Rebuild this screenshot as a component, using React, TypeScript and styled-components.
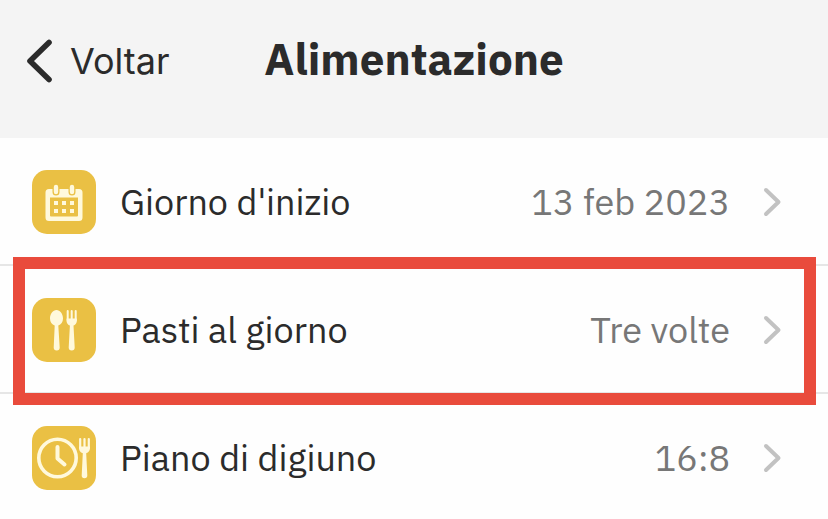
import React from "react";
import styled, { createGlobalStyle } from "styled-components";

const GlobalStyle = createGlobalStyle`
  * { box-sizing: border-box; }
  body {
    margin: 0;
    background: #fefefe;
    color: #2b2b2b;
    font-family: "IBM Plex Sans", "Noto Sans", sans-serif;
  }
`;

const Header = styled.header`
  display: grid;
  grid-template-columns: 1fr auto 1fr;
  align-items: center;
  padding: 8px 24px 24px;
  min-height: 138px;
  background: #f4f4f4;
`;

const BackButton = styled.button`
  display: flex;
  align-items: center;
  justify-self: start;
  gap: 18px;
  padding: 0;
  border: 0;
  background: none;
  color: #2b2b2b;
  font-family: Inter, sans-serif;
  font-size: 36px;
  font-weight: 400;
  line-height: 48px;
  cursor: pointer;
`;

const Title = styled.h1`
  margin: 0;
  padding-bottom: 4px;
  font-size: 44px;
  font-weight: 700;
  line-height: 56px;
`;

const List = styled.ul`
  margin: 0;
  padding: 0;
  list-style: none;
`;

const Item = styled.li`
  position: relative;
  border-bottom: 2px solid #e6e6e6;

  &:last-child {
    border-bottom: 0;
  }
`;

const RowButton = styled.button`
  display: flex;
  align-items: center;
  width: 100%;
  padding: 32px 45px 30px 32px;
  border: 0;
  background: none;
  color: inherit;
  font: inherit;
  font-size: 36px;
  line-height: 64px;
  text-align: left;
  cursor: pointer;

  ${Item}:last-child & {
    padding-bottom: 28px;
  }
`;

const IconTile = styled.span`
  display: flex;
  flex: none;
  width: 64px;
  height: 64px;
  margin-right: 24px;
  border-radius: 15px;
  background: #eac044;
`;

const Label = styled.span`
  flex: 1;
`;

const Value = styled.span`
  margin-right: 31px;
  color: #777777;
`;

const Highlight = styled.div`
  position: absolute;
  inset: -9px 12px -13px 13px;
  border: 12px solid #e94b3c;
  pointer-events: none;
`;

const CREAM = "#fff9dc";

const BackIcon = () => (
  <svg width="28" height="44" viewBox="0 0 28 44" fill="none" aria-hidden="true">
    <path d="M25 3.500 6 22 25 40.500" stroke="#2b2b2b" strokeWidth="5.600" strokeLinecap="round" strokeLinejoin="round" />
  </svg>
);

const ChevronIcon = () => (
  <svg width="22" height="32" viewBox="0 0 22 32" fill="none" aria-hidden="true">
    <path d="M5 4 17.500 16 5 28" stroke="#c2c2c2" strokeWidth="4" strokeLinecap="round" strokeLinejoin="round" />
  </svg>
);

const CalendarIcon = () => (
  <svg width="64" height="64" viewBox="0 0 64 64" aria-hidden="true">
    <path
      fill={CREAM}
      fillRule="evenodd"
      d="M17 19h30a3.500 3.500 0 0 1 3.500 3.500V47.500A3.500 3.500 0 0 1 47 51H17a3.500 3.500 0 0 1-3.500-3.500V22.500A3.500 3.500 0 0 1 17 19ZM18 27.500V45.500a1 1 0 0 0 1 1H45a1 1 0 0 0 1-1V27.500Z"
    />
    <path d="M24 18v4M40 18v4" stroke="#eac044" strokeWidth="7" strokeLinecap="round" />
    <path d="M24 17v5M40 17v5" stroke={CREAM} strokeWidth="4.400" strokeLinecap="round" />
    <path fill={CREAM} d="M22 31h4v4h-4ZM30 31h4v4h-4ZM38 31h4v4h-4ZM22 39h4v4h-4ZM30 39h4v4h-4ZM38 39h4v4h-4Z" />
  </svg>
);

const CutleryIcon = () => (
  <svg width="64" height="64" viewBox="0 0 64 64" fill={CREAM} aria-hidden="true">
    <path d="M24.500 12C28 12 31 16 31 20.500C31 24 29 26.500 26.300 27.500L27.700 49.500a2.700 2.700 0 0 1-6 0L22.700 27.500C20 26.500 18 24 18 20.500C18 16 21 12 24.500 12Z" />
    <path d="M35.700 13v9M39.700 13v9M43.700 13v9" stroke={CREAM} strokeWidth="2" strokeLinecap="round" />
    <path d="M34.700 20.500h10C45.500 24.500 43.700 26.700 41.500 27.500L42.700 49.500a2.700 2.700 0 0 1-6 0L37.900 27.500C35.700 26.700 33.900 24.500 34.700 20.500Z" />
  </svg>
);

const FastingIcon = () => (
  <svg width="64" height="64" viewBox="0 0 64 64" aria-hidden="true">
    <circle cx="25.500" cy="32" r="18.700" fill="none" stroke={CREAM} strokeWidth="3.600" />
    <path d="M25.500 21v11.500l7 6" fill="none" stroke={CREAM} strokeWidth="4" strokeLinecap="round" strokeLinejoin="round" />
    <path d="M48.200 13v9M52.500 13v9M56.800 13v9" stroke={CREAM} strokeWidth="2.200" strokeLinecap="round" />
    <path fill={CREAM} d="M47.100 20.500h10.800C58.300 24.500 56.700 26.500 54.200 27.200L55.300 49.500a2.600 2.600 0 0 1-5.600 0L50.800 27.200C48.300 26.500 46.700 24.500 47.100 20.500Z" />
  </svg>
);

const rows = [
  { label: "Giorno d'inizio", value: "13 feb 2023", Icon: CalendarIcon },
  { label: "Pasti al giorno", value: "Tre volte", Icon: CutleryIcon, highlighted: true },
  { label: "Piano di digiuno", value: "16:8", Icon: FastingIcon },
];

export default function App() {
  return (
    <>
      <GlobalStyle />
      <Header>
        <BackButton type="button">
          <BackIcon />
          Voltar
        </BackButton>
        <Title>Alimentazione</Title>
      </Header>
      <main>
        <List>
          {rows.map(({ label, value, Icon, highlighted }) => (
            <Item key={label}>
              <RowButton type="button">
                <IconTile>
                  <Icon />
                </IconTile>
                <Label>{label}</Label>
                <Value>{value}</Value>
                <ChevronIcon />
              </RowButton>
              {highlighted && <Highlight />}
            </Item>
          ))}
        </List>
      </main>
    </>
  );
}
